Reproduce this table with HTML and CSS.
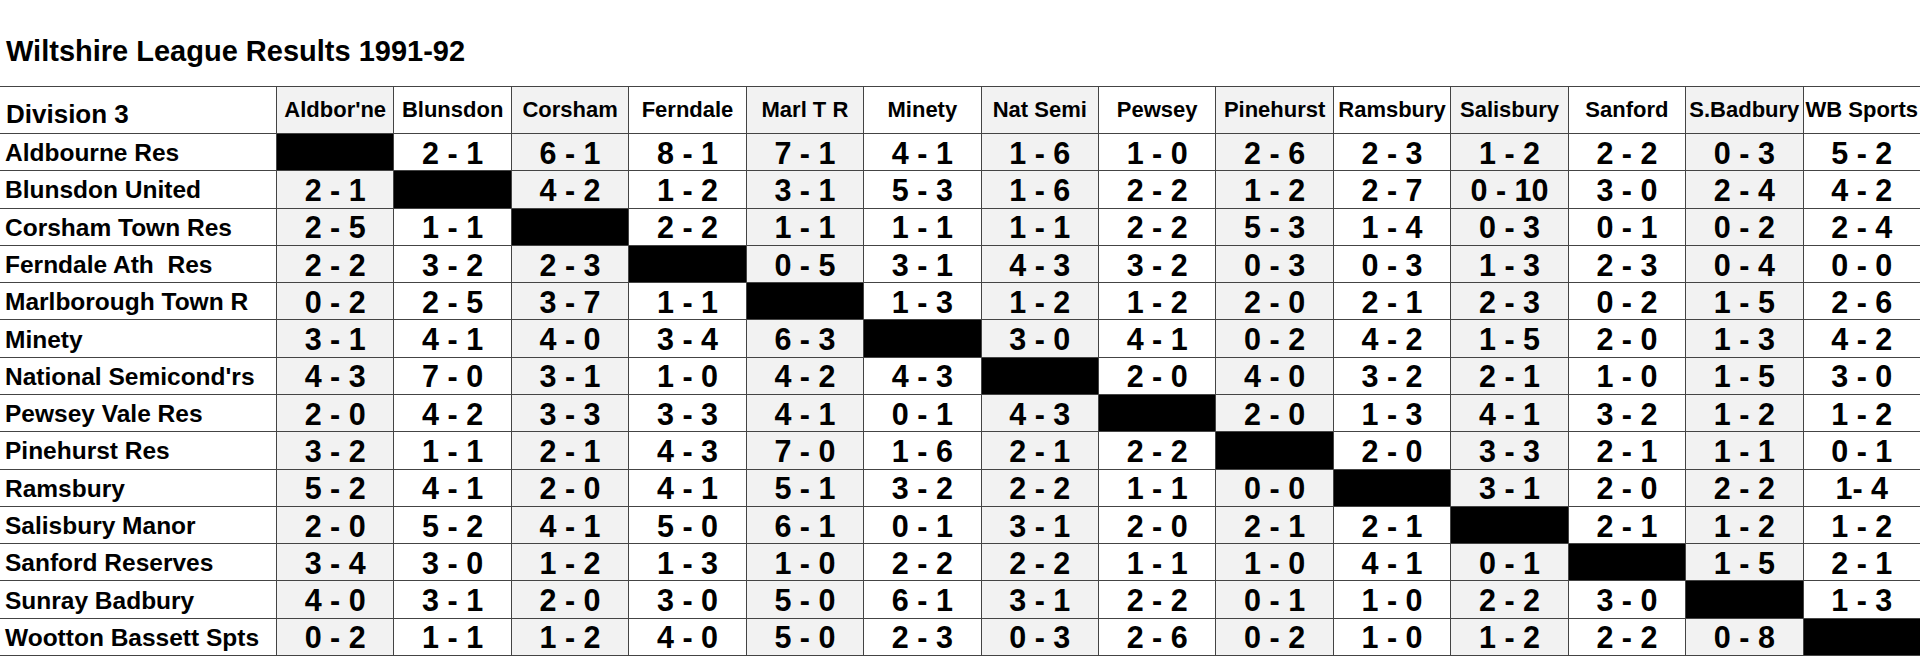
FILE: index.html
```html
<!DOCTYPE html>
<html lang="en">
<head>
<meta charset="utf-8">
<title>Wiltshire League Results 1991-92</title>
<link rel="stylesheet" href="styles.css">
</head>
<body>
<h1 class="title">Wiltshire League Results 1991-92</h1>
<div class="grid">
  <div class="division">Division 3</div>
  <div class="hd g">Aldbor'ne</div><div class="hd">Blunsdon</div><div class="hd g">Corsham</div><div class="hd">Ferndale</div><div class="hd g">Marl T R</div><div class="hd">Minety</div><div class="hd g">Nat Semi</div><div class="hd">Pewsey</div><div class="hd g">Pinehurst</div><div class="hd">Ramsbury</div><div class="hd g">Salisbury</div><div class="hd">Sanford</div><div class="hd g">S.Badbury</div><div class="hd">WB Sports</div>

  <div class="team">Aldbourne Res</div>
  <div class="sc x"></div><div class="sc">2 - 1</div><div class="sc g">6 - 1</div><div class="sc">8 - 1</div><div class="sc g">7 - 1</div><div class="sc">4 - 1</div><div class="sc g">1 - 6</div><div class="sc">1 - 0</div><div class="sc g">2 - 6</div><div class="sc">2 - 3</div><div class="sc g">1 - 2</div><div class="sc">2 - 2</div><div class="sc g">0 - 3</div><div class="sc">5 - 2</div>

  <div class="team">Blunsdon United</div>
  <div class="sc g">2 - 1</div><div class="sc x"></div><div class="sc g">4 - 2</div><div class="sc">1 - 2</div><div class="sc g">3 - 1</div><div class="sc">5 - 3</div><div class="sc g">1 - 6</div><div class="sc">2 - 2</div><div class="sc g">1 - 2</div><div class="sc">2 - 7</div><div class="sc g">0 - 10</div><div class="sc">3 - 0</div><div class="sc g">2 - 4</div><div class="sc">4 - 2</div>

  <div class="team">Corsham Town Res</div>
  <div class="sc g">2 - 5</div><div class="sc">1 - 1</div><div class="sc x"></div><div class="sc">2 - 2</div><div class="sc g">1 - 1</div><div class="sc">1 - 1</div><div class="sc g">1 - 1</div><div class="sc">2 - 2</div><div class="sc g">5 - 3</div><div class="sc">1 - 4</div><div class="sc g">0 - 3</div><div class="sc">0 - 1</div><div class="sc g">0 - 2</div><div class="sc">2 - 4</div>

  <div class="team">Ferndale Ath&nbsp; Res</div>
  <div class="sc g">2 - 2</div><div class="sc">3 - 2</div><div class="sc g">2 - 3</div><div class="sc x"></div><div class="sc g">0 - 5</div><div class="sc">3 - 1</div><div class="sc g">4 - 3</div><div class="sc">3 - 2</div><div class="sc g">0 - 3</div><div class="sc">0 - 3</div><div class="sc g">1 - 3</div><div class="sc">2 - 3</div><div class="sc g">0 - 4</div><div class="sc">0 - 0</div>

  <div class="team">Marlborough Town R</div>
  <div class="sc g">0 - 2</div><div class="sc">2 - 5</div><div class="sc g">3 - 7</div><div class="sc">1 - 1</div><div class="sc x"></div><div class="sc">1 - 3</div><div class="sc g">1 - 2</div><div class="sc">1 - 2</div><div class="sc g">2 - 0</div><div class="sc">2 - 1</div><div class="sc g">2 - 3</div><div class="sc">0 - 2</div><div class="sc g">1 - 5</div><div class="sc">2 - 6</div>

  <div class="team">Minety</div>
  <div class="sc g">3 - 1</div><div class="sc">4 - 1</div><div class="sc g">4 - 0</div><div class="sc">3 - 4</div><div class="sc g">6 - 3</div><div class="sc x"></div><div class="sc g">3 - 0</div><div class="sc">4 - 1</div><div class="sc g">0 - 2</div><div class="sc">4 - 2</div><div class="sc g">1 - 5</div><div class="sc">2 - 0</div><div class="sc g">1 - 3</div><div class="sc">4 - 2</div>

  <div class="team">National Semicond'rs</div>
  <div class="sc g">4 - 3</div><div class="sc">7 - 0</div><div class="sc g">3 - 1</div><div class="sc">1 - 0</div><div class="sc g">4 - 2</div><div class="sc">4 - 3</div><div class="sc x"></div><div class="sc">2 - 0</div><div class="sc g">4 - 0</div><div class="sc">3 - 2</div><div class="sc g">2 - 1</div><div class="sc">1 - 0</div><div class="sc g">1 - 5</div><div class="sc">3 - 0</div>

  <div class="team">Pewsey Vale Res</div>
  <div class="sc g">2 - 0</div><div class="sc">4 - 2</div><div class="sc g">3 - 3</div><div class="sc">3 - 3</div><div class="sc g">4 - 1</div><div class="sc">0 - 1</div><div class="sc g">4 - 3</div><div class="sc x"></div><div class="sc g">2 - 0</div><div class="sc">1 - 3</div><div class="sc g">4 - 1</div><div class="sc">3 - 2</div><div class="sc g">1 - 2</div><div class="sc">1 - 2</div>

  <div class="team">Pinehurst Res</div>
  <div class="sc g">3 - 2</div><div class="sc">1 - 1</div><div class="sc g">2 - 1</div><div class="sc">4 - 3</div><div class="sc g">7 - 0</div><div class="sc">1 - 6</div><div class="sc g">2 - 1</div><div class="sc">2 - 2</div><div class="sc x"></div><div class="sc">2 - 0</div><div class="sc g">3 - 3</div><div class="sc">2 - 1</div><div class="sc g">1 - 1</div><div class="sc">0 - 1</div>

  <div class="team">Ramsbury</div>
  <div class="sc g">5 - 2</div><div class="sc">4 - 1</div><div class="sc g">2 - 0</div><div class="sc">4 - 1</div><div class="sc g">5 - 1</div><div class="sc">3 - 2</div><div class="sc g">2 - 2</div><div class="sc">1 - 1</div><div class="sc g">0 - 0</div><div class="sc x"></div><div class="sc g">3 - 1</div><div class="sc">2 - 0</div><div class="sc g">2 - 2</div><div class="sc">1- 4</div>

  <div class="team">Salisbury Manor</div>
  <div class="sc g">2 - 0</div><div class="sc">5 - 2</div><div class="sc g">4 - 1</div><div class="sc">5 - 0</div><div class="sc g">6 - 1</div><div class="sc">0 - 1</div><div class="sc g">3 - 1</div><div class="sc">2 - 0</div><div class="sc g">2 - 1</div><div class="sc">2 - 1</div><div class="sc x"></div><div class="sc">2 - 1</div><div class="sc g">1 - 2</div><div class="sc">1 - 2</div>

  <div class="team">Sanford Reserves</div>
  <div class="sc g">3 - 4</div><div class="sc">3 - 0</div><div class="sc g">1 - 2</div><div class="sc">1 - 3</div><div class="sc g">1 - 0</div><div class="sc">2 - 2</div><div class="sc g">2 - 2</div><div class="sc">1 - 1</div><div class="sc g">1 - 0</div><div class="sc">4 - 1</div><div class="sc g">0 - 1</div><div class="sc x"></div><div class="sc g">1 - 5</div><div class="sc">2 - 1</div>

  <div class="team">Sunray Badbury</div>
  <div class="sc g">4 - 0</div><div class="sc">3 - 1</div><div class="sc g">2 - 0</div><div class="sc">3 - 0</div><div class="sc g">5 - 0</div><div class="sc">6 - 1</div><div class="sc g">3 - 1</div><div class="sc">2 - 2</div><div class="sc g">0 - 1</div><div class="sc">1 - 0</div><div class="sc g">2 - 2</div><div class="sc">3 - 0</div><div class="sc x"></div><div class="sc">1 - 3</div>

  <div class="team">Wootton Bassett Spts</div>
  <div class="sc g">0 - 2</div><div class="sc">1 - 1</div><div class="sc g">1 - 2</div><div class="sc">4 - 0</div><div class="sc g">5 - 0</div><div class="sc">2 - 3</div><div class="sc g">0 - 3</div><div class="sc">2 - 6</div><div class="sc g">0 - 2</div><div class="sc">1 - 0</div><div class="sc g">1 - 2</div><div class="sc">2 - 2</div><div class="sc g">0 - 8</div><div class="sc x"></div>
</div>
</body>
</html>
```

FILE: styles.css
```css
html, body {
  margin: 0;
  padding: 0;
  background: #ffffff;
  overflow: hidden;
}

body {
  width: 1920px;
  height: 656px;
  font-family: "Liberation Sans", Arial, sans-serif;
  font-weight: bold;
  color: #000000;
}

.title {
  margin: 0;
  box-sizing: border-box;
  height: 86px;
  padding: 35px 0 0 6px;
  font-size: 29px;
  line-height: normal;
  font-weight: bold;
}

.grid {
  display: grid;
  grid-template-columns: 276px repeat(14, 1fr);
  grid-template-rows: 46px repeat(14, 1fr);
  gap: 1px;
  box-sizing: border-box;
  height: 570px;
  background: #444444;
  border-top: 1px solid #444444;
  border-bottom: 1px solid #444444;
}

.grid > div {
  background: #ffffff;
  display: flex;
  align-items: center;
  justify-content: center;
  white-space: nowrap;
  overflow: hidden;
}

.grid > .g {
  background: #f2f2f2;
}

.grid > .x {
  background: #000000;
}

.division {
  font-size: 26px;
  padding: 0 0 3px 6px;
}

.grid > .division {
  justify-content: flex-start;
  align-items: flex-end;
}

.hd {
  font-size: 22px;
}

.grid > .team {
  justify-content: flex-start;
  padding: 2px 0 0 5px;
  font-size: 24.5px;
}

.sc {
  font-size: 30.5px;
  padding-top: 2px;
}
```
